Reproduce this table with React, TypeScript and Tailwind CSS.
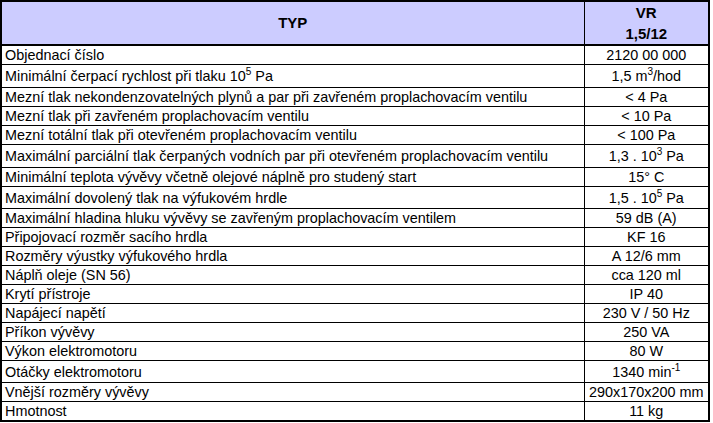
import React from 'react';

type Row = { label: React.ReactNode; value: React.ReactNode; h?: string };

function Sup({ children }: { children: React.ReactNode }) {
  return <span className="relative -top-[6px] text-[10px] leading-none">{children}</span>;
}

const rows: Row[] = [
  { label: 'Objednací číslo', value: '2120 00 000' },
  {
    label: (
      <>
        Minimální čerpací rychlost při tlaku 10<Sup>5</Sup> Pa
      </>
    ),
    value: (
      <>
        1,5 m<Sup>3</Sup>/hod
      </>
    ),
    h: 'h-[23px]',
  },
  { label: 'Mezní tlak nekondenzovatelných plynů a par při zavřeném proplachovacím ventilu', value: '< 4 Pa' },
  { label: 'Mezní tlak při zavřeném proplachovacím ventilu', value: '< 10 Pa' },
  { label: 'Mezní totální tlak při otevřeném proplachovacím ventilu', value: '< 100 Pa' },
  {
    label: 'Maximální parciální tlak čerpaných vodních par při otevřeném proplachovacím ventilu',
    value: (
      <>
        1,3 . 10<Sup>3</Sup> Pa
      </>
    ),
    h: 'h-[23px]',
  },
  { label: 'Minimální teplota vývěvy včetně olejové náplně pro studený start', value: '15° C' },
  {
    label: 'Maximální dovolený tlak na výfukovém hrdle',
    value: (
      <>
        1,5 . 10<Sup>5</Sup> Pa
      </>
    ),
    h: 'h-[22px]',
  },
  { label: 'Maximální hladina hluku vývěvy se zavřeným proplachovacím ventilem', value: '59 dB (A)' },
  { label: 'Připojovací rozměr sacího hrdla', value: 'KF 16' },
  { label: 'Rozměry výustky výfukového hrdla', value: 'A 12/6 mm' },
  { label: 'Náplň oleje (SN 56)', value: 'cca 120 ml' },
  { label: 'Krytí přístroje', value: 'IP 40' },
  { label: 'Napájecí napětí', value: '230 V / 50 Hz' },
  { label: 'Příkon vývěvy', value: '250 VA' },
  { label: 'Výkon elektromotoru', value: '80 W' },
  {
    label: 'Otáčky elektromotoru',
    value: (
      <>
        1340 min<Sup>-1</Sup>
      </>
    ),
    h: 'h-[22px]',
  },
  { label: 'Vnější rozměry vývěvy', value: '290x170x200 mm' },
  { label: 'Hmotnost', value: '11 kg' },
];

export default function App() {
  return (
    <div className="w-[713px] h-[423px] bg-white text-black font-['Liberation_Sans',Arial,sans-serif]">
      <table className="w-[710px] border-collapse border-2 border-black text-[14.4px]">
        <thead>
          <tr className="bg-[#ccccff] border-b-2 border-black">
            <th className="h-[44px] w-[583px] border border-black pt-[1px] text-[15px] font-bold text-center">TYP</th>
            <th className="border border-black text-[15px] font-bold text-center leading-[21px]">
              VR
              <br />
              1,5/12
            </th>
          </tr>
        </thead>
        <tbody>
          {rows.map((row, i) => (
            <tr key={i} className={row.h ?? 'h-[19px]'}>
              <td className="border border-black pl-[3px] pr-0 pt-[1px] pb-0 leading-[17px] whitespace-nowrap">
                {row.label}
              </td>
              <td className="border border-black px-[2px] pt-[1px] pb-0 leading-[17px] text-center whitespace-nowrap">
                {row.value}
              </td>
            </tr>
          ))}
        </tbody>
      </table>
    </div>
  );
}
